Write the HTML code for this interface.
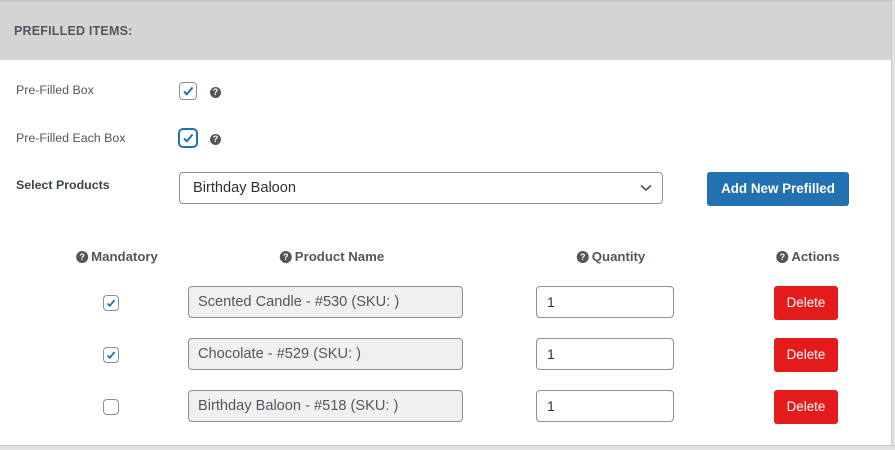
<!DOCTYPE html>
<html><head><style>
*{box-sizing:border-box;margin:0;padding:0}
body{width:895px;height:450px;background:#fff;font-family:"Liberation Sans",sans-serif;position:relative;overflow:hidden;color:#3c434a}
.a{position:absolute}
.hdr{left:0;top:0;width:893px;height:60px;background:#d4d4d4;border-top:2px solid #c8c8c8}
.ttl{left:14px;top:24px;font-size:12.5px;font-weight:bold;color:#50575e;letter-spacing:.2px}
.rb{left:891px;top:0;width:4px;height:450px;background:#e2e2e2;border-left:1px solid #c9c9c9}
.bb{left:0;top:445px;width:895px;height:5px;background:#e2e2e2;border-top:1px solid #cfcfcf}
.lbl{font-size:12.4px;color:#50575e}
.cb{width:18px;height:18px;border:1px solid #8c8f94;border-radius:4px;background:#fff}
.cb svg{position:absolute;left:1px;top:1px}
.q{width:11px;height:11px;border-radius:50%;background:#555;color:#fff;font-size:9px;font-weight:bold;text-align:center;line-height:11px}
.hd{font-size:13.2px;font-weight:bold;color:#50575e;display:flex;align-items:center;gap:3px;transform:translateX(-50%)}
.hd .q{display:inline-block;width:12px;height:12px;line-height:12px}
.pn{left:188px;width:275px;height:32px;border:1px solid #8c8f94;border-radius:4px;background:#f0f0f0;font-size:14.6px;padding:7px 9px;color:#50575e}
.qt{left:536px;width:138px;height:32px;border:1px solid #8c8f94;border-radius:4px;background:#fff;font-size:14px;padding:7px 10px;color:#2c3338}
.del{left:774px;width:64px;height:34px;background:#e41b1b;border-radius:3px;color:#fff;font-size:13.4px;text-align:center;line-height:34px}
.sc{width:16px;height:16px;border:1px solid #8c8f94;border-radius:4px;background:#fff;left:103px}
</style></head><body>
<div class="a hdr"></div>
<div class="a ttl">PREFILLED ITEMS:</div>
<div class="a rb"></div>
<div class="a bb"></div>

<div class="a lbl" style="left:16px;top:83px">Pre-Filled Box</div>
<div class="a cb" style="left:179px;top:82px"><svg width="14" height="14" viewBox="0 0 14 14"><path d="M3 7.5l2.8 2.8L11.5 3.5" fill="none" stroke="#2271b1" stroke-width="2"/></svg></div>
<div class="a q" style="left:210px;top:87px">?</div>

<div class="a lbl" style="left:16px;top:131px">Pre-Filled Each Box</div>
<div class="a cb" style="left:178px;top:128px;width:20px;height:20px;border:2px solid #2271b1;border-radius:5px"><svg width="14" height="14" viewBox="0 0 14 14"><path d="M3 7.5l2.8 2.8L11.5 3.5" fill="none" stroke="#2271b1" stroke-width="2"/></svg></div>
<div class="a q" style="left:210px;top:134px">?</div>

<div class="a lbl" style="left:16px;top:178px;font-weight:bold;color:#3c434a">Select Products</div>
<div class="a" style="left:179px;top:172px;width:484px;height:32px;border:1px solid #8c8f94;border-radius:4px;font-size:14.6px;padding:7px 13px;color:#2c3338">Birthday Baloon
<svg class="a" style="right:10px;top:11px" width="12" height="8" viewBox="0 0 12 8"><path d="M1 1.5l5 4.5 5-4.5" fill="none" stroke="#50575e" stroke-width="1.6"/></svg></div>
<div class="a" style="left:707px;top:172px;width:142px;height:34px;background:#2271b1;border-radius:3px;color:#fff;font-size:13.4px;font-weight:bold;text-align:center;line-height:34px">Add New Prefilled</div>

<div class="a hd" style="left:117px;top:249px"><span class="q">?</span>Mandatory</div>
<div class="a hd" style="left:332px;top:249px"><span class="q">?</span>Product Name</div>
<div class="a hd" style="left:611px;top:249px"><span class="q">?</span>Quantity</div>
<div class="a hd" style="left:808px;top:249px"><span class="q">?</span>Actions</div>

<div class="a sc" style="top:295px"><svg class="a" style="left:1px;top:1px" width="12" height="12" viewBox="0 0 12 12"><path d="M2.5 6.5l2.3 2.3L9.5 3" fill="none" stroke="#2271b1" stroke-width="1.8"/></svg></div>
<div class="a pn" style="top:286px">Scented Candle - #530 (SKU: )</div>
<div class="a qt" style="top:286px">1</div>
<div class="a del" style="top:286px">Delete</div>

<div class="a sc" style="top:347px"><svg class="a" style="left:1px;top:1px" width="12" height="12" viewBox="0 0 12 12"><path d="M2.5 6.5l2.3 2.3L9.5 3" fill="none" stroke="#2271b1" stroke-width="1.8"/></svg></div>
<div class="a pn" style="top:338px">Chocolate - #529 (SKU: )</div>
<div class="a qt" style="top:338px">1</div>
<div class="a del" style="top:338px">Delete</div>

<div class="a sc" style="top:399px"></div>
<div class="a pn" style="top:390px">Birthday Baloon - #518 (SKU: )</div>
<div class="a qt" style="top:390px">1</div>
<div class="a del" style="top:390px">Delete</div>
</body></html>
